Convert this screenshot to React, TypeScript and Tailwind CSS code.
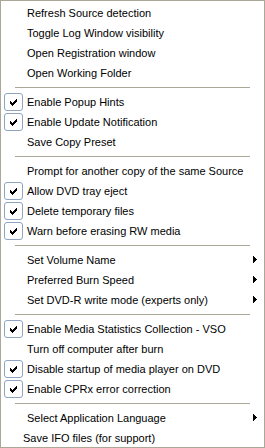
import React from "react";

type Item =
  | { kind: "sep" }
  | { kind: "item"; label: string; checked?: boolean; sub?: boolean; alt?: boolean };

const items: Item[] = [
  { kind: "item", label: "Refresh Source detection" },
  { kind: "item", label: "Toggle Log Window visibility" },
  { kind: "item", label: "Open Registration window" },
  { kind: "item", label: "Open Working Folder" },
  { kind: "sep" },
  { kind: "item", label: "Enable Popup Hints", checked: true },
  { kind: "item", label: "Enable Update Notification", checked: true },
  { kind: "item", label: "Save Copy Preset" },
  { kind: "sep" },
  { kind: "item", label: "Prompt for another copy of the same Source" },
  { kind: "item", label: "Allow DVD tray eject", checked: true },
  { kind: "item", label: "Delete temporary files", checked: true },
  { kind: "item", label: "Warn before erasing RW media", checked: true },
  { kind: "sep" },
  { kind: "item", label: "Set Volume Name", sub: true },
  { kind: "item", label: "Preferred Burn Speed", sub: true },
  { kind: "item", label: "Set DVD-R write mode (experts only)", sub: true },
  { kind: "sep" },
  { kind: "item", label: "Enable Media Statistics Collection - VSO", checked: true },
  { kind: "item", label: "Turn off computer after burn" },
  { kind: "item", label: "Disable startup of media player on DVD", checked: true },
  { kind: "item", label: "Enable CPRx error correction", checked: true },
  { kind: "sep" },
  { kind: "item", label: "Select Application Language", sub: true },
  { kind: "item", label: "Save IFO files (for support)", alt: true },
];

function Check() {
  return (
    <div className="absolute left-[3px] top-[1px] w-[19px] h-[18px] rounded-[3px] border border-[#8ea4c1] bg-white flex items-center justify-center">
      <svg width="7" height="7" viewBox="0 0 7 7" shapeRendering="crispEdges">
        <rect x="0" y="2" width="1" height="3" fill="#000" />
        <rect x="1" y="3" width="1" height="3" fill="#000" />
        <rect x="2" y="4" width="1" height="3" fill="#000" />
        <rect x="3" y="3" width="1" height="3" fill="#000" />
        <rect x="4" y="2" width="1" height="3" fill="#000" />
        <rect x="5" y="1" width="1" height="3" fill="#000" />
        <rect x="6" y="0" width="1" height="3" fill="#000" />
      </svg>
    </div>
  );
}

function Arrow() {
  return (
    <svg className="absolute left-[252px] top-[6px]" width="4" height="7" viewBox="0 0 4 7" shapeRendering="crispEdges">
      <rect x="0" y="0" width="1" height="7" fill="#000" />
      <rect x="1" y="1" width="1" height="5" fill="#000" />
      <rect x="2" y="2" width="1" height="3" fill="#000" />
      <rect x="3" y="3" width="1" height="1" fill="#000" />
    </svg>
  );
}

export default function App() {
  return (
    <div className="w-[265px] h-[448px] bg-white border border-[#aca899] overflow-hidden pt-[2px]" style={{ fontFamily: '"Liberation Sans", Arial, sans-serif' }}>
      <div className="flex flex-col">
        {items.map((it, i) =>
          it.kind === "sep" ? (
            <div key={i} className="h-[9px] flex items-center pl-[14px] pr-[14px]">
              <div className="h-px w-full bg-[#aca899]" />
            </div>
          ) : (
            <div key={i} className="relative h-[20px] flex items-center text-[11px] text-black leading-none whitespace-nowrap">
              {it.checked && <Check />}
              <span className={it.alt ? "pl-[22px]" : "pl-[26px]"}>{it.label}</span>
              {it.sub && <Arrow />}
            </div>
          )
        )}
      </div>
    </div>
  );
}
